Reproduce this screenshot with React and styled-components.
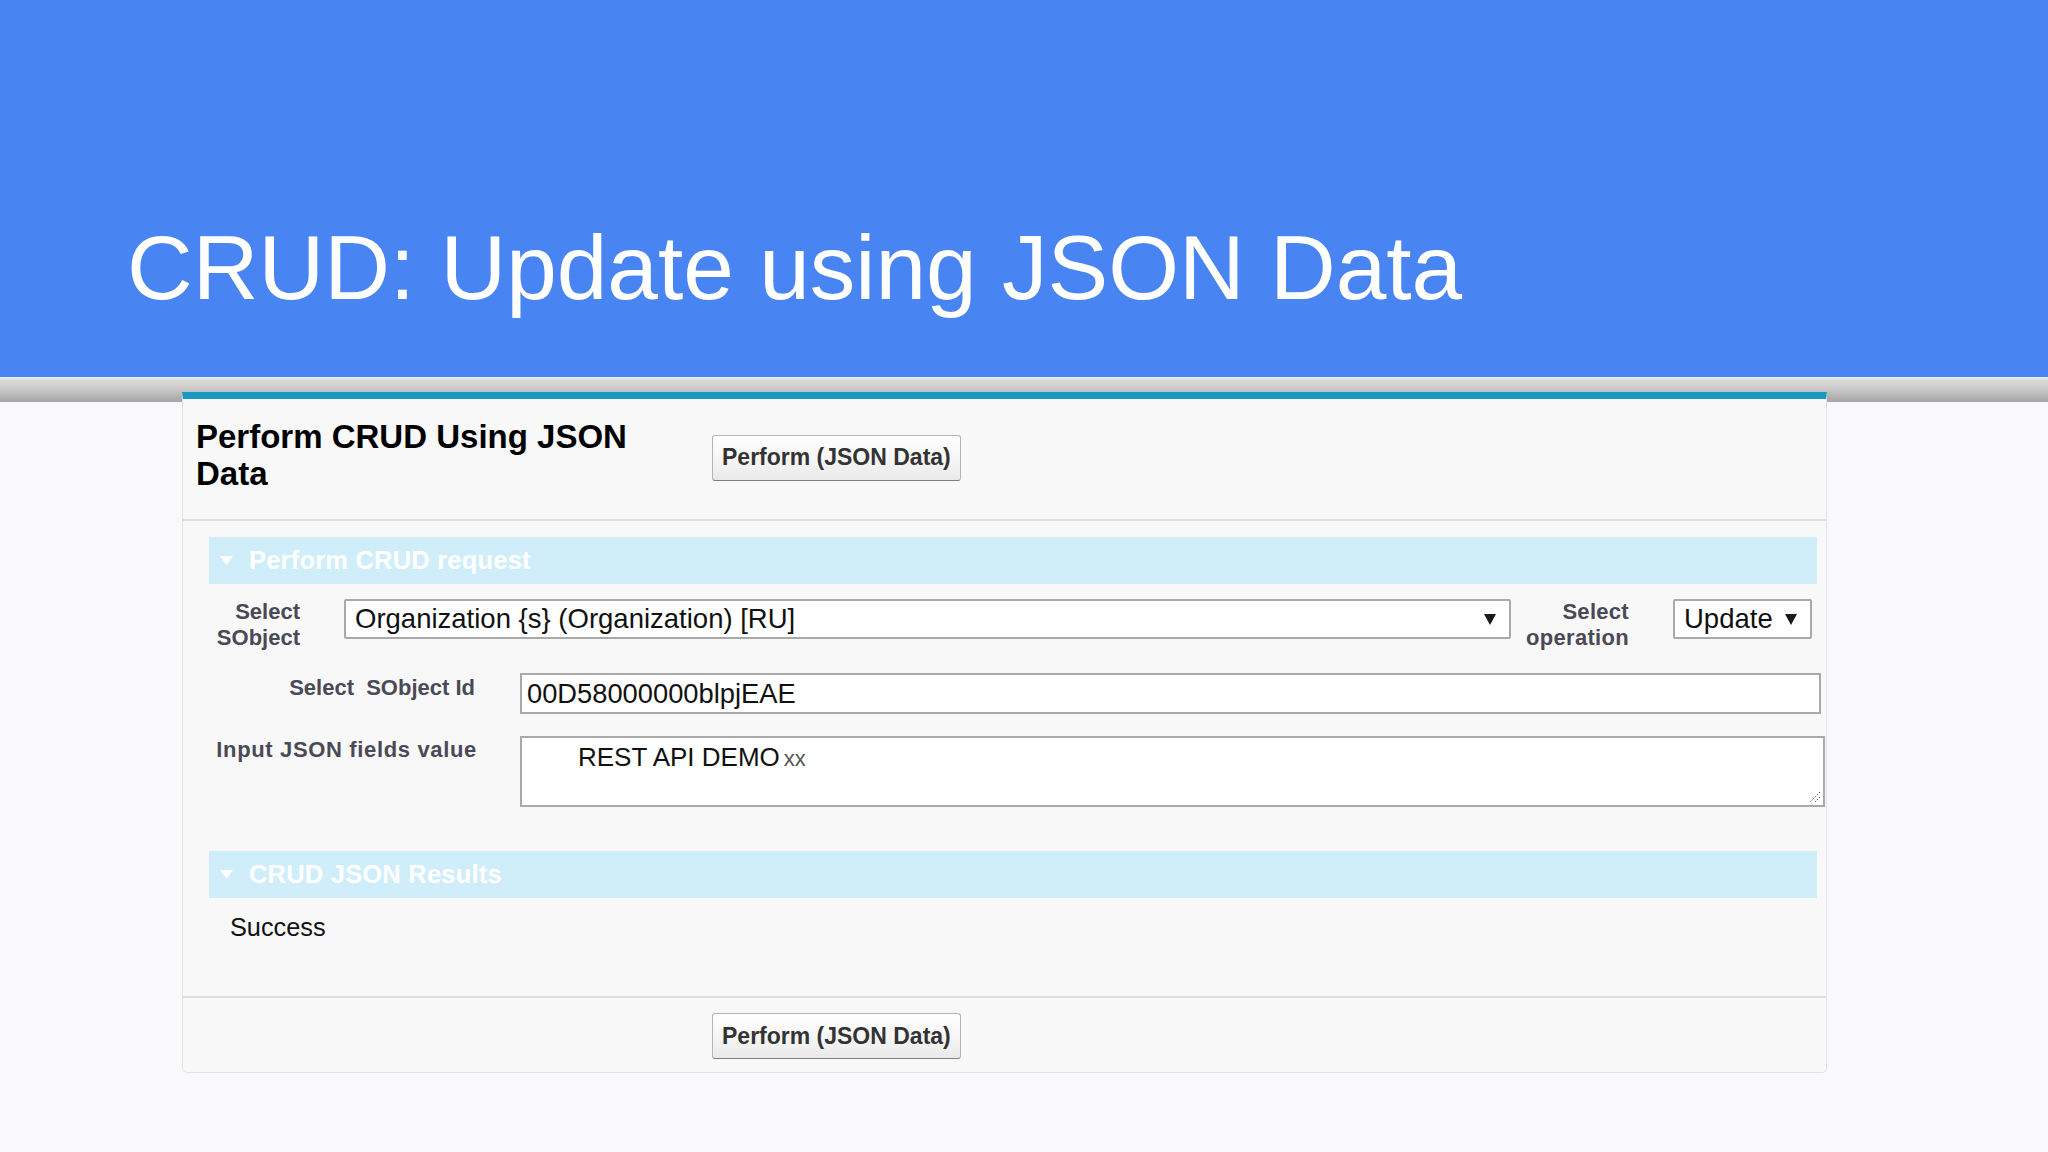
import React from "react";
import styled, { createGlobalStyle } from "styled-components";

const Global = createGlobalStyle`
  html, body { margin: 0; padding: 0; }
  body {
    background: #f9f9fb;
    font-family: "Liberation Sans", Arial, sans-serif;
    width: 2048px;
    height: 1152px;
    overflow: hidden;
  }
`;

const Slide = styled.div`
  width: 2048px;
  height: 1152px;
  display: flex;
  flex-direction: column;
  background: #f9f9fb;
`;

const TitleBand = styled.header`
  box-sizing: border-box;
  height: 377px;
  padding: 222px 0 0 127px;
  background: #4885f2;
`;

const SlideTitle = styled.h1`
  margin: 0;
  font-family: "Liberation Sans", Arial, sans-serif;
  font-weight: 400;
  font-size: 91px;
  line-height: 91px;
  color: #ffffff;
  letter-spacing: 0;
`;

const Stage = styled.main`
  flex: 1;
  padding: 15px 0 0 182px;
  background:
    linear-gradient(#f3f3f3 0, #dedede 2px, #c9c9c9 12px, #a4a4a4 100%) top / 100% 25px no-repeat,
    #f9f9fb;
`;

const Panel = styled.section`
  box-sizing: border-box;
  width: 1645px;
  background: #f8f8f9;
  border: 1px solid #e2e2e4;
  border-top: 7px solid #1b97c1;
  border-radius: 0 0 5px 5px;
`;

const Bar = styled.div`
  display: flex;
  align-items: ${(p) => (p.$footer ? "flex-start" : "center")};
  gap: 16px;
  padding: ${(p) => (p.$footer ? "15px 0 13px 13px" : "19px 0 27px 13px")};
  border-top: ${(p) => (p.$footer ? "2px solid #dedede" : "none")};
  border-bottom: ${(p) => (p.$footer ? "none" : "2px solid #dedede")};
`;

const BarTitle = styled.h2`
  margin: 0;
  width: 500px;
  font-size: 33px;
  line-height: 37px;
  font-weight: 700;
  color: #000;
`;

const Button = styled.button`
  box-sizing: border-box;
  height: 46px;
  margin-top: ${(p) => (p.$shift ? "5px" : "0")};
  padding: 0 9px;
  border: 1px solid #b5b5b5;
  border-bottom-color: #7f7f7f;
  border-radius: 3px;
  background: linear-gradient(#ffffff, #f4f4f4 60%, #e9e9e9);
  font-family: "Liberation Sans", Arial, sans-serif;
  font-weight: 700;
  font-size: 23px;
  color: #333;
  white-space: nowrap;
`;

const Body = styled.div`
  padding: 16px 9px 54px 26px;
`;

const SectionHeader = styled.div`
  display: flex;
  align-items: center;
  gap: 16px;
  height: 47px;
  padding-left: 11px;
  margin-top: ${(p) => p.$mt || 0}px;
  background: #cfeef9;
  color: #ffffff;
  font-weight: 700;
  font-size: 25.5px;
  letter-spacing: 0.2px;
`;

const Rows = styled.div`
  display: flex;
  flex-direction: column;
  gap: 22px;
  margin-top: 15px;
`;

const Row = styled.div`
  display: flex;
  align-items: flex-start;
`;

const Label = styled.label`
  flex: none;
  box-sizing: border-box;
  width: ${(p) => p.$w}px;
  padding-top: ${(p) => p.$pt || 0}px;
  margin-right: ${(p) => p.$gap}px;
  text-align: right;
  font-weight: 700;
  font-size: 22px;
  line-height: 26px;
  letter-spacing: ${(p) => p.$ls || 0}px;
  white-space: nowrap;
  color: #4a4a56;
`;

const SelectBox = styled.div`
  flex: none;
  box-sizing: border-box;
  display: flex;
  align-items: center;
  justify-content: space-between;
  width: ${(p) => p.$w}px;
  height: 40px;
  padding: 0 13px 0 9px;
  background: #ffffff;
  border: 2px solid #a9a9a9;
  border-radius: 2px;
  font-size: 27.5px;
  color: #111;
  white-space: nowrap;
`;

const TextInput = styled.div`
  flex: none;
  box-sizing: border-box;
  display: flex;
  align-items: center;
  width: ${(p) => p.$w}px;
  height: 41px;
  padding: 0 5px;
  background: #ffffff;
  border: 2px solid #a9a9a9;
  font-size: 27.3px;
  color: #111;
`;

const TextArea = styled.div`
  position: relative;
  flex: none;
  box-sizing: border-box;
  width: ${(p) => p.$w}px;
  height: 71px;
  padding: 4px 10px 0 56px;
  background: #ffffff;
  border: 2px solid #a9a9a9;
  font-size: 26px;
  line-height: 30px;
  color: #111;
`;

const Faint = styled.span`
  font-size: 22px;
  color: #555;
  margin-left: 4px;
`;

const Grip = styled.svg`
  position: absolute;
  right: 2px;
  bottom: 2px;
`;

const Result = styled.p`
  margin: 14px 0 0 21px;
  font-size: 25.3px;
  line-height: 30px;
  color: #111;
`;

const Caret = ({ color = "#1a1a1a" }) => (
  <svg width="12" height="11" viewBox="0 0 12 11">
    <polygon points="0,0 12,0 6,11" fill={color} />
  </svg>
);

const Twisty = () => (
  <svg width="13" height="9" viewBox="0 0 13 9">
    <polygon points="0,0 13,0 6.5,9" fill="#ffffff" />
  </svg>
);

export default function App() {
  return (
    <>
      <Global />
      <Slide>
        <TitleBand>
          <SlideTitle>CRUD: Update using JSON Data</SlideTitle>
        </TitleBand>
        <Stage>
          <Panel>
            <Bar>
              <BarTitle>Perform CRUD Using JSON Data</BarTitle>
              <Button $shift>Perform (JSON Data)</Button>
            </Bar>
            <Body>
              <SectionHeader>
                <Twisty />
                <span>Perform CRUD request</span>
              </SectionHeader>
              <Rows>
                <Row>
                  <Label $w={91} $gap={44}>
                    Select
                    <br />
                    SObject
                  </Label>
                  <SelectBox $w={1167}>
                    <span>Organization {"{s}"} (Organization) [RU]</span>
                    <Caret />
                  </SelectBox>
                  <Label $w={118} $gap={44} $ls={0.3}>
                    Select
                    <br />
                    operation
                  </Label>
                  <SelectBox $w={139}>
                    <span>Update</span>
                    <Caret />
                  </SelectBox>
                </Row>
                <Row>
                  <Label $w={266} $gap={45} $pt={2}>
                    Select&nbsp; SObject Id
                  </Label>
                  <TextInput $w={1301}>00D58000000blpjEAE</TextInput>
                </Row>
                <Row>
                  <Label $w={268} $gap={43} $pt={1} $ls={0.65}>
                    Input JSON fields value
                  </Label>
                  <TextArea $w={1305}>
                    REST API DEMO<Faint>xx</Faint>
                    <Grip width="12" height="12" viewBox="0 0 12 12">
                      <line x1="11" y1="1" x2="1" y2="11" stroke="#555" strokeWidth="1" strokeDasharray="1.5 1.5" />
                      <line x1="11" y1="6" x2="6" y2="11" stroke="#555" strokeWidth="1" strokeDasharray="1.5 1.5" />
                    </Grip>
                  </TextArea>
                </Row>
              </Rows>
              <SectionHeader $mt={44}>
                <Twisty />
                <span>CRUD JSON Results</span>
              </SectionHeader>
              <Result>Success</Result>
            </Body>
            <Bar $footer>
              <BarTitle as="div" aria-hidden="true" />
              <Button>Perform (JSON Data)</Button>
            </Bar>
          </Panel>
        </Stage>
      </Slide>
    </>
  );
}
